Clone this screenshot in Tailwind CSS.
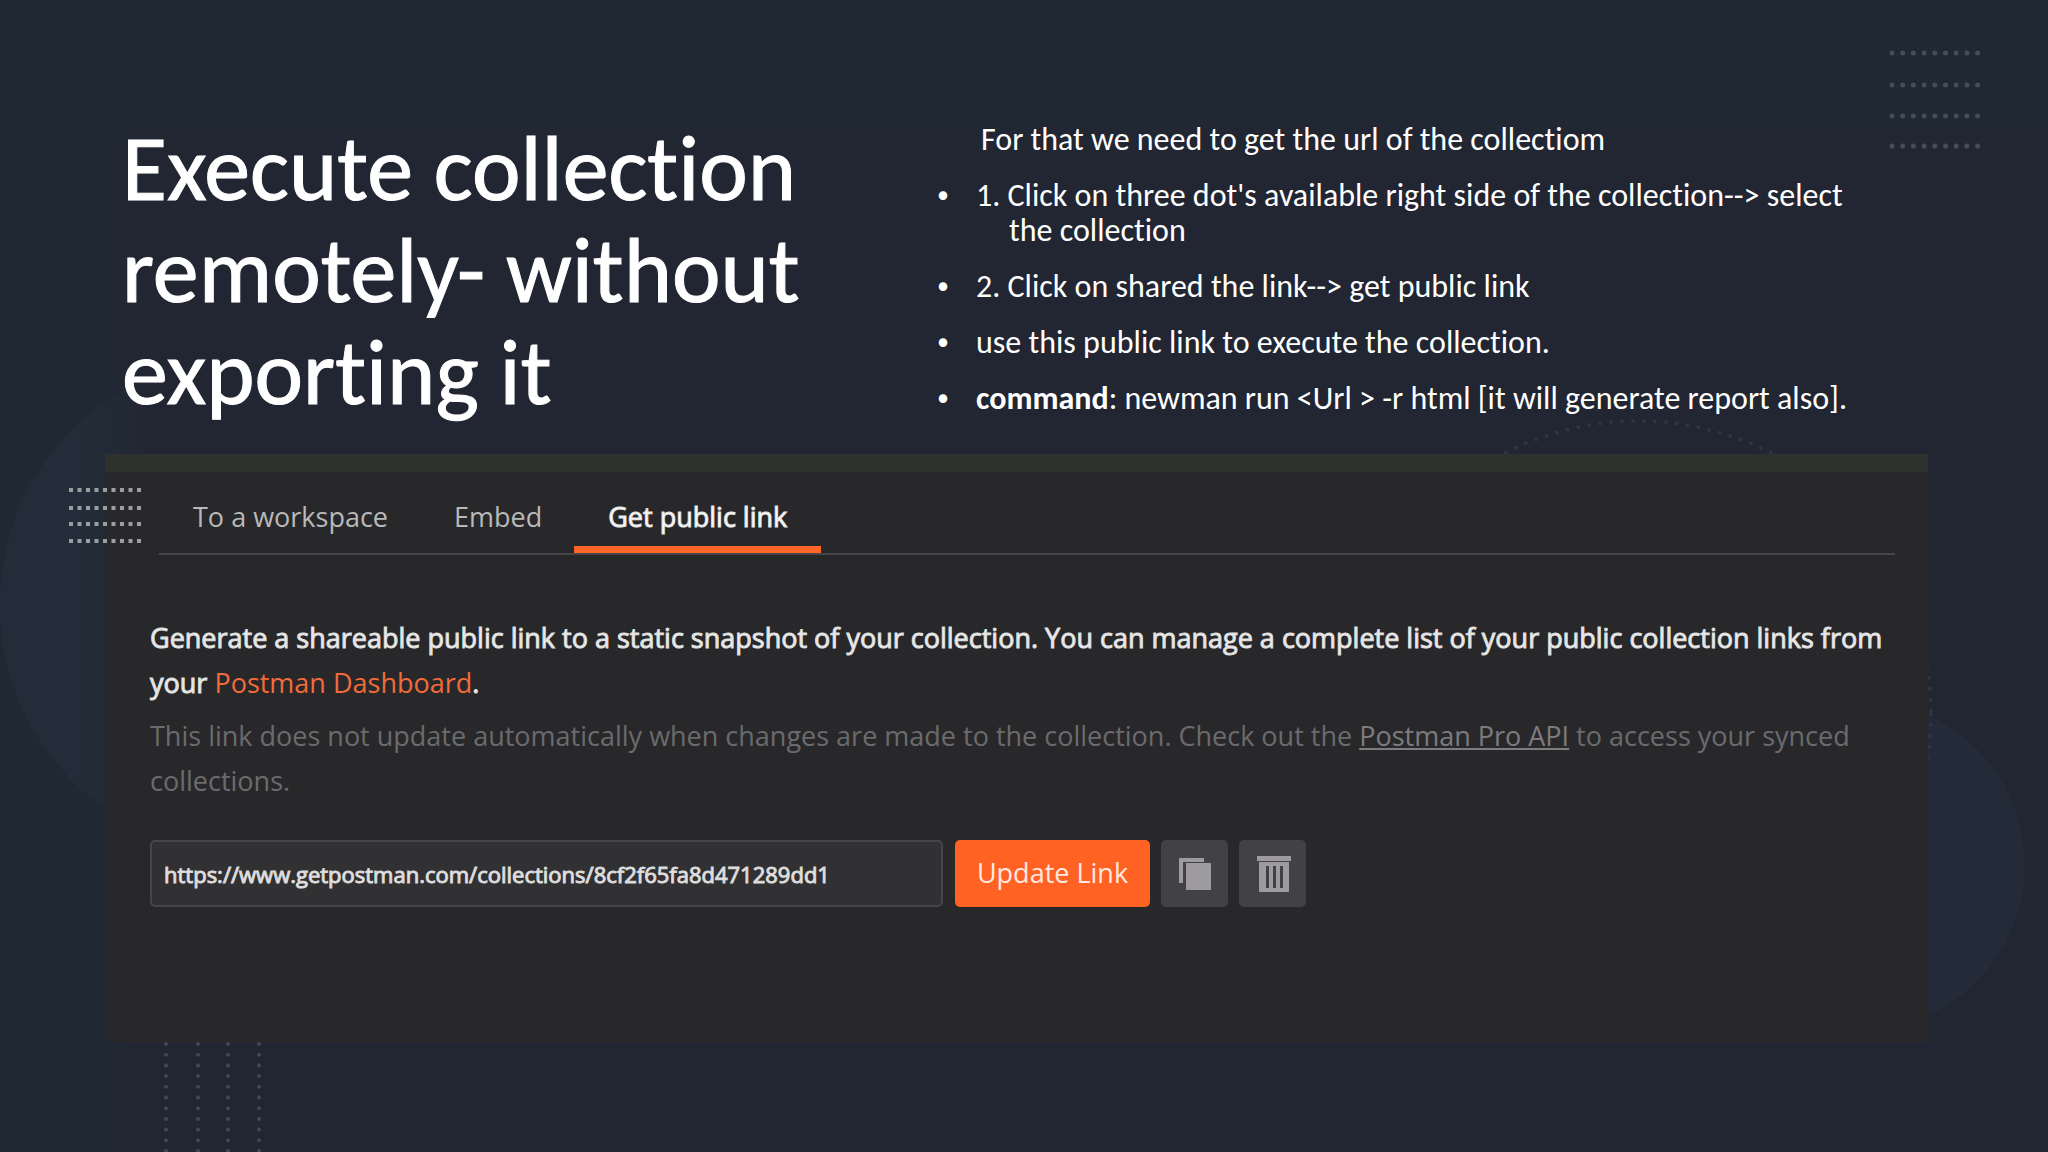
<!DOCTYPE html>
<html lang="en">
<head>
<meta charset="utf-8">
<meta name="viewport" content="width=device-width, initial-scale=1">
<title>Execute collection remotely</title>
<script src="https://cdn.jsdelivr.net/npm/@tailwindcss/browser@4"></script>
</head>
<body class="relative min-h-screen overflow-x-hidden bg-[#222632] font-['Calibri','Carlito','Lato',sans-serif] text-white [font-variant-ligatures:none]">
<svg class="absolute inset-0 -z-10 h-full w-full" viewBox="0 0 2048 1152" preserveAspectRatio="xMidYMid slice" aria-hidden="true">
  <defs>
    <linearGradient id="top" x1="0" y1="0" x2="0" y2="1"><stop offset="0" stop-color="#1f2933"/><stop offset=".6" stop-color="#1f2933"/><stop offset="1" stop-color="#1f2933" stop-opacity="0"/></linearGradient>
    <linearGradient id="left" x1="0" y1="0" x2="1" y2="0"><stop offset="0" stop-color="#1f2933"/><stop offset=".75" stop-color="#1f2933"/><stop offset="1" stop-color="#1f2933" stop-opacity="0"/></linearGradient>
    <linearGradient id="disc" x1="0" y1="0" x2="1" y2="0"><stop offset="0" stop-color="#222d39"/><stop offset=".15" stop-color="#222d39"/><stop offset=".3" stop-color="#222d39" stop-opacity="0"/></linearGradient>
  </defs>
  <rect width="2048" height="1152" fill="#222632"/>
  <rect width="2048" height="160" fill="url(#top)"/>
  <rect width="130" height="1152" fill="url(#left)"/>
  <circle cx="250" cy="605" r="250" fill="url(#disc)"/>
  <circle cx="1860" cy="865" r="165" fill="#232a38"/>
  <circle cx="1638" cy="714" r="293" fill="none" stroke="#2e3543" stroke-width="4" stroke-linecap="round" stroke-dasharray="0 11"/>
  <g fill="none" stroke="#454d5a" stroke-width="5" stroke-linecap="round" stroke-dasharray="0 10.7">
    <path d="M1892 53h87M1892 85h87M1892 116h87M1892 146h87"/>
    <path d="M166 1044v108M198 1044v108M228 1044v108M259 1044v108" stroke-width="4" stroke="#414856"/>
  </g>
</svg>

<main class="flex flex-col pt-[118px] pr-[120px] pl-[105px]">
  <header class="flex h-[336px] items-start">
    <h1 class="w-[820px] shrink-0 pl-[17px] text-[92px] leading-[102px] [-webkit-text-stroke:1px_white]">Execute collection<br>remotely- without<br>exporting it</h1>
    <div class="flex-1 pt-1 text-[32px] leading-[35px] text-nowrap">
      <p class="mb-[21px] pl-[56px]">For that we need to get the url of the collectiom</p>
      <ul class="space-y-[21px] [&>li]:flex [&>li]:before:w-[51px] [&>li]:before:shrink-0 [&>li]:before:pl-3 [&>li]:before:text-2xl [&>li]:before:leading-[33px] [&>li]:before:content-['•']">
        <li><span>1. Click on three dot's available right side of the collection--&gt; select<br><span class="pl-[33px]">the collection</span></span></li>
        <li><span>2. Click on shared the link--&gt; get public link</span></li>
        <li><span>use this public link to execute the collection.</span></li>
        <li><span><b>command</b>: newman run &lt;Url &gt; -r html [it will generate report also].</span></li>
      </ul>
    </div>
  </header>

  <section class="relative h-[588px] border-t-[18px] border-[#2f312e] bg-[#28282a] pr-[33px] pl-[45px] font-['Open_Sans',sans-serif] text-[27px]">
    <svg class="absolute top-[12px] -left-[36px] h-[60px] w-[76px]" viewBox="0 0 76 60" aria-hidden="true">
      <path d="M0 6h76M0 24h76M0 40h76M0 57h76" fill="none" stroke="#9b9ea1" stroke-width="4" stroke-dasharray="4 4.5"/>
    </svg>
    <nav class="ml-[9px] flex h-[83px] items-stretch border-b-2 border-[#464648] text-[#b9b9b9]">
      <a href="#" class="px-[34px] pt-[25px]">To a workspace</a>
      <a href="#" class="px-[32px] pt-[25px]">Embed</a>
      <a href="#" class="border-b-[7px] border-[#ff6428] px-[34px] pt-[25px] text-white [-webkit-text-stroke:1px_#e4e4e4]">Get public link</a>
    </nav>
    <p class="mt-[60px] leading-[45px] text-[#ededed] [-webkit-text-stroke:1px_#dedede]">Generate a shareable public link to a static snapshot of your collection. You can manage a complete list of your public collection links from your <a href="#" class="text-[#f26b3a] [-webkit-text-stroke:0]">Postman Dashboard</a>.</p>
    <p class="mt-[8px] leading-[45px] text-[#6b6b6d]">This link does not update automatically when changes are made to the collection. Check out the <a href="#" class="text-[#7c7c7e] underline">Postman Pro API</a> to access your synced collections.</p>
    <form class="mt-[37px] flex h-[67px]">
      <input aria-label="Public link" class="mr-3 w-[793px] rounded-[5px] border-2 border-[#464648] bg-[#313032] px-3 pt-[2px] text-[22px] text-[#e8e8e8] [-webkit-text-stroke:1px_#d8d8d8]" value="https://www.getpostman.com/collections/8cf2f65fa8d471289dd1">
      <button type="button" class="mr-[11px] w-[195px] rounded-[5px] bg-[#ff6223] text-[#ffe9e0]">Update Link</button>
      <button type="button" aria-label="Copy link" class="mr-[11px] w-[67px] rounded-[5px] bg-[#424144]">
        <svg viewBox="0 0 67 67" fill="#9d9b9e"><path d="M18 18h25v4H22v21h-4z"/><path d="M25 23h25v27H25z"/></svg>
      </button>
      <button type="button" aria-label="Delete link" class="w-[67px] rounded-[5px] bg-[#424144]">
        <svg viewBox="0 0 67 67" fill="#9d9b9e"><path d="M18 16h34v5H18z"/><path fill-rule="evenodd" d="M20 22h30v30H20zM27 26v22h3V26zM34 26v22h3V26zM41 26v22h3V26z"/></svg>
      </button>
    </form>
  </section>
</main>
</body>
</html>
